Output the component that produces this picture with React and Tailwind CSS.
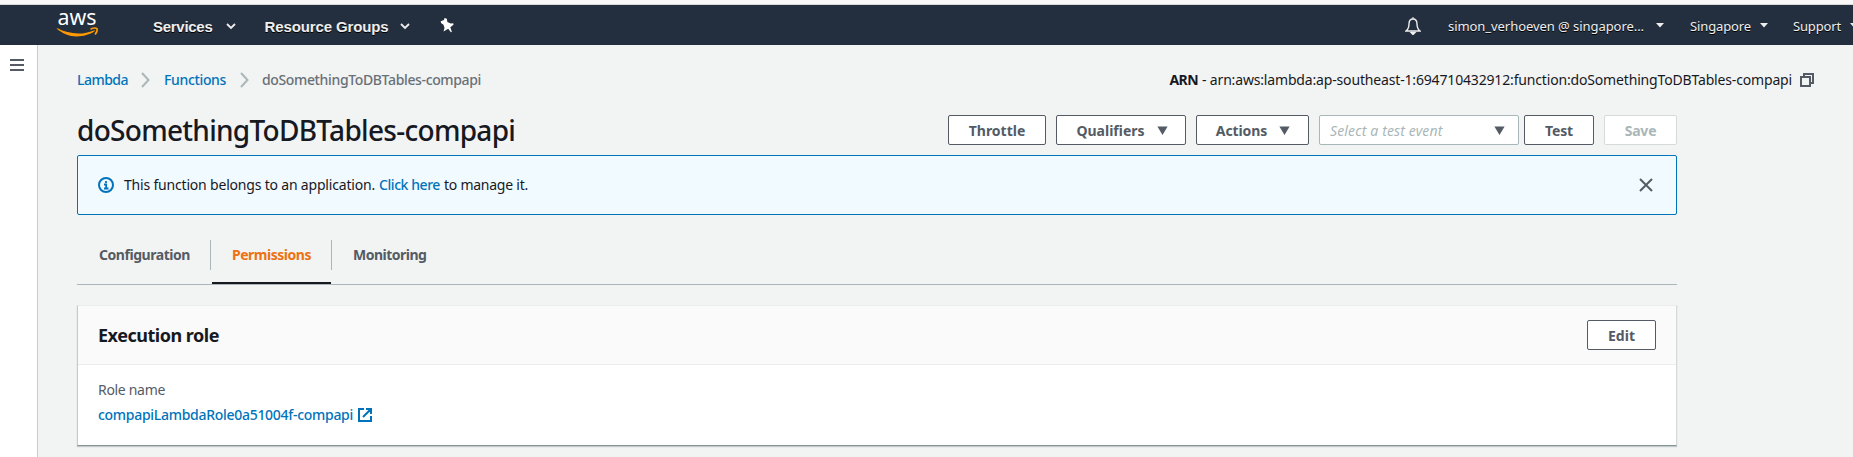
const Chevron = ({ className }) => (
  <svg viewBox="0 0 10 7" className={`h-[7px] w-[10px] shrink-0 ${className}`} fill="none" stroke="#eee" strokeWidth="1.8">
    <path d="M1 1l4 4 4-4" />
  </svg>
);
const Caret = ({ className }) => (
  <svg viewBox="0 0 8 5" className={`h-[5px] w-2 shrink-0 ${className}`}>
    <path d="M0 0h8L4 4.6z" fill="#eee" />
  </svg>
);
const Triangle = ({ className }) => (
  <svg viewBox="0 0 11 9" className={`h-[9px] w-[11px] shrink-0 ${className}`}>
    <path d="M.4 .6h10.2L5.5 9z" fill="#545b64" />
  </svg>
);
const Separator = ({ className }) => (
  <svg viewBox="0 0 9 16" className={`h-4 w-[9px] shrink-0 ${className}`} fill="none" stroke="#aab7b8" strokeWidth="2">
    <path d="M1 1l6.5 7L1 15" />
  </svg>
);

function TopBar() {
  return (
    <header className="flex h-10 shrink-0 items-center bg-[#232f3e] text-[13px] whitespace-nowrap text-[#eee]">
      <svg viewBox="0 -7 42 40" className="ml-[57px] h-10 w-[42px] shrink-0 overflow-visible">
        <text x="0.500" y="13" fontSize="21.500" textLength="39" lengthAdjust="spacingAndGlyphs" fill="#fff" fontFamily="Noto Sans, sans-serif">aws</text>
        <path d="M0 17c5 4 12 7.500 20 7.500 6 0 13-2 17.500-5.200.700-.500.300-1.300-.600-.900-5 2-10.500 3.100-15.500 3.100C14 21.500 6.500 19.500.5 16.300c-.500-.200-.900.300-.500.700z" fill="#f90" />
        <path d="M33.500 17.200c2.500-1.200 5.500-1.200 6.500-.600.400 1.400-.300 4-2 6" fill="none" stroke="#f90" strokeWidth="1.600" />
      </svg>
      <span className="ml-[54px] pt-1 font-['Liberation_Sans'] text-[15px] font-bold tracking-[-0.28px] [text-shadow:0_1px_0_#000]">Services</span>
      <Chevron className="mt-[3px] ml-[14px]" />
      <span className="ml-[28px] pt-1 font-['Liberation_Sans'] text-[15px] font-bold tracking-[-0.125px] [text-shadow:0_1px_0_#000]">Resource Groups</span>
      <Chevron className="mt-[3px] ml-[12px]" />
      <svg viewBox="0 0 14 15" className="ml-[30px] h-[15px] w-[14px] shrink-0">
        <path d="M4.500 0L6.800.800l.600 3.200 3.300 1.600 2.500-.400.300 1.600L10.300 9.200l1.600 4.800-1 .300L8.200 10.800 3.500 13.500 4.500 10 3.500 6.800 1 5 .7 3.200 4 2z" fill="#fff" />
      </svg>
      <svg viewBox="0 0 16 18" className="mt-px mr-[27px] ml-auto h-[18px] w-4 shrink-0" fill="none" stroke="#eee" strokeWidth="1.400">
        <path d="M8 2C5 2 4 4.500 4 7c0 4-1 5.500-3 7h14c-2-1.500-3-3-3-7 0-2.500-1-5-4-5z" />
        <path d="M6 15.500h4L8 17.500zM8 .2v1.500" fill="#eee" />
      </svg>
      <span className="pt-1 tracking-[-0.059px] [text-shadow:0_1px_0_#000]">simon_verhoeven @ singapore...</span>
      <Caret className="mt-px ml-3" />
      <span className="ml-[26px] pt-1 tracking-[-0.125px] [text-shadow:0_1px_0_#000]">Singapore</span>
      <Caret className="mt-px ml-[9px]" />
      <span className="ml-[25px] pt-1 tracking-[-0.156px] [text-shadow:0_1px_0_#000]">Support</span>
      <Caret className="mt-px -mr-[5px] ml-[9px]" />
    </header>
  );
}

function Breadcrumbs() {
  return (
    <div className="flex h-7 items-center text-[#16191f]">
      <a className="font-medium tracking-[-0.521px] text-[#0073bb]">Lambda</a>
      <Separator className="mt-[2px] ml-[13px]" />
      <a className="ml-[14px] font-medium tracking-[-0.345px] text-[#0073bb]">Functions</a>
      <Separator className="mt-[2px] ml-[14px]" />
      <span className="ml-[13px] font-medium tracking-[-0.358px] text-[#687078]">doSomethingToDBTables-compapi</span>
      <b className="ml-auto tracking-[-0.6px]">ARN</b>
      <span className="ml-1 tracking-[-0.164px]">- arn:aws:lambda:ap-southeast-1:694710432912:function:doSomethingToDBTables-compapi</span>
      <svg viewBox="0 0 14 14" className="mt-[2px] mr-[39px] ml-2 h-[14px] w-[14px]" fill="none" stroke="#545b64" strokeWidth="2">
        <path d="M4 4V1h9v9h-3M1 4h9v9H1z" />
      </svg>
    </div>
  );
}

const Button = ({ className = "", children }) => (
  <button className={`flex h-[30px] items-center justify-center rounded-[2px] border bg-white font-bold ${className}`}>{children}</button>
);

function Title() {
  return (
    <div className="mt-[22px] flex h-[30px] w-[1600px] items-center">
      <h1 className="mr-auto text-[28px] leading-[30px] font-medium tracking-[-0.71px] text-[#16191f]">doSomethingToDBTables-compapi</h1>
      <Button className="w-[98px] border-[#545b64] text-[#545b64]"><span>Throttle</span></Button>
      <Button className="ml-[10px] w-[130px] border-[#545b64] pl-[2px] text-[#545b64]"><span>Qualifiers</span><Triangle className="ml-[12px]" /></Button>
      <Button className="ml-[10px] w-[113px] border-[#545b64] pl-px text-[#545b64]"><span className="tracking-[-0.1px]">Actions</span><Triangle className="ml-[12px]" /></Button>
      <div className="ml-[10px] flex h-[30px] w-[200px] items-center justify-between rounded-[2px] border border-[#aab7b8] bg-white pr-[13px] pl-[10px] text-[#aab7b8] italic">
        <span className="tracking-[0.14px]">Select a test event</span>
        <Triangle />
      </div>
      <Button className="ml-[5px] w-[70px] border-[#545b64] text-[#545b64]"><span className="tracking-[-0.2px]">Test</span></Button>
      <Button className="ml-[10px] w-[73px] border-[#d5dbdb] text-[#aab7b8]"><span className="tracking-[-0.2px]">Save</span></Button>
    </div>
  );
}

function Notice() {
  return (
    <div className="mt-[10px] flex h-[60px] w-[1600px] items-center rounded-[2px] border border-[#0073bb] bg-[#f1faff] pb-px pl-5 text-[#16191f]">
      <svg viewBox="0 0 16 16" className="mt-px mr-[10px] h-4 w-4" fill="none" stroke="#0073bb" strokeWidth="2">
        <circle cx="8" cy="8" r="7" />
        <path d="M8 4v2M6 7.500h2.200v3.500M6 11.500h4.500" strokeWidth="1.800" />
      </svg>
      <span className="tracking-[-0.19px]">This function belongs to an application.</span>
      <a className="mx-1 font-medium tracking-[-0.43px] text-[#0073bb]">Click here</a>
      <span className="tracking-[-0.245px]">to manage it.</span>
      <svg viewBox="0 0 14 14" className="mt-px mr-[23px] ml-auto h-[14px] w-[14px]" fill="none" stroke="#545b64" strokeWidth="2">
        <path d="M1 1l12 12M13 1L1 13" />
      </svg>
    </div>
  );
}

function Tabs() {
  return (
    <nav className="mt-[25px] flex h-[45px] w-[1600px] border-b border-[#aab7b8] font-bold text-[#545b64]">
      <div className="flex h-[30px] w-[134px] items-center border-r border-[#aab7b8] pb-[2px] pl-[22px]"><span className="tracking-[-0.451px]">Configuration</span></div>
      <div className="ml-px flex w-[119px] flex-col border-b-2 border-[#16191f]">
        <div className="flex h-[30px] items-center pb-[2px] pl-5 text-[#ec7211]"><span className="tracking-[-0.48px]">Permissions</span></div>
      </div>
      <div className="flex h-[30px] items-center border-l border-[#aab7b8] pb-[2px] pl-[21px]"><span className="tracking-[-0.5px]">Monitoring</span></div>
    </nav>
  );
}

function RoleCard() {
  return (
    <section className="mt-5 h-[141px] w-[1600px] border border-t-[#eaeded] border-r-[#d5dbdb] border-b-[#879596] border-l-[#c4cbcb] bg-white shadow-[0_1px_1px_0_rgba(0,28,36,0.2)]">
      <div className="flex h-[59px] items-center justify-between border-b border-[#eaeded] bg-[#fafafa] px-5">
        <h2 className="text-[18px] font-bold tracking-[-0.481px] text-[#16191f]">Execution role</h2>
        <Button className="w-[69px] border-[#545b64] text-[#545b64]"><span>Edit</span></Button>
      </div>
      <div className="flex flex-col px-5 pt-[14px] leading-[22px]">
        <span className="self-start tracking-[-0.314px] text-[#545b64]">Role name</span>
        <a className="mt-[3px] flex items-center font-medium text-[#0073bb]">
          <span className="tracking-[-0.289px]">compapiLambdaRole0a51004f-compapi</span>
          <svg viewBox="0 0 14 14" className="ml-[5px] h-[14px] w-[14px]" fill="none" stroke="#0073bb" strokeWidth="2">
            <path d="M6 1H1v12h12V8M8 1h5v5M13 1L5 9" />
          </svg>
        </a>
      </div>
    </section>
  );
}

export default function App() {
  return (
    <div className="flex h-[457px] w-[1853px] flex-col overflow-hidden bg-[#f2f3f3] font-['Noto_Sans',sans-serif] text-[14px]">
      <div className="h-[5px] shrink-0 border-b border-[#d8d8d8] bg-[#f8f8f8]" />
      <TopBar />
      <div className="flex min-h-0 flex-1">
        <aside className="w-[38px] border-r border-[#c8cccc] bg-white pt-[14px] pl-[10px]">
          <svg viewBox="0 0 14 12" className="h-3 w-[14px]"><path d="M0 1h14M0 6h14M0 11h14" stroke="#545b64" strokeWidth="2" /></svg>
        </aside>
        <main className="flex-1 pt-5 pl-[39px] whitespace-nowrap">
          <Breadcrumbs />
          <Title />
          <Notice />
          <Tabs />
          <RoleCard />
        </main>
      </div>
    </div>
  );
}
